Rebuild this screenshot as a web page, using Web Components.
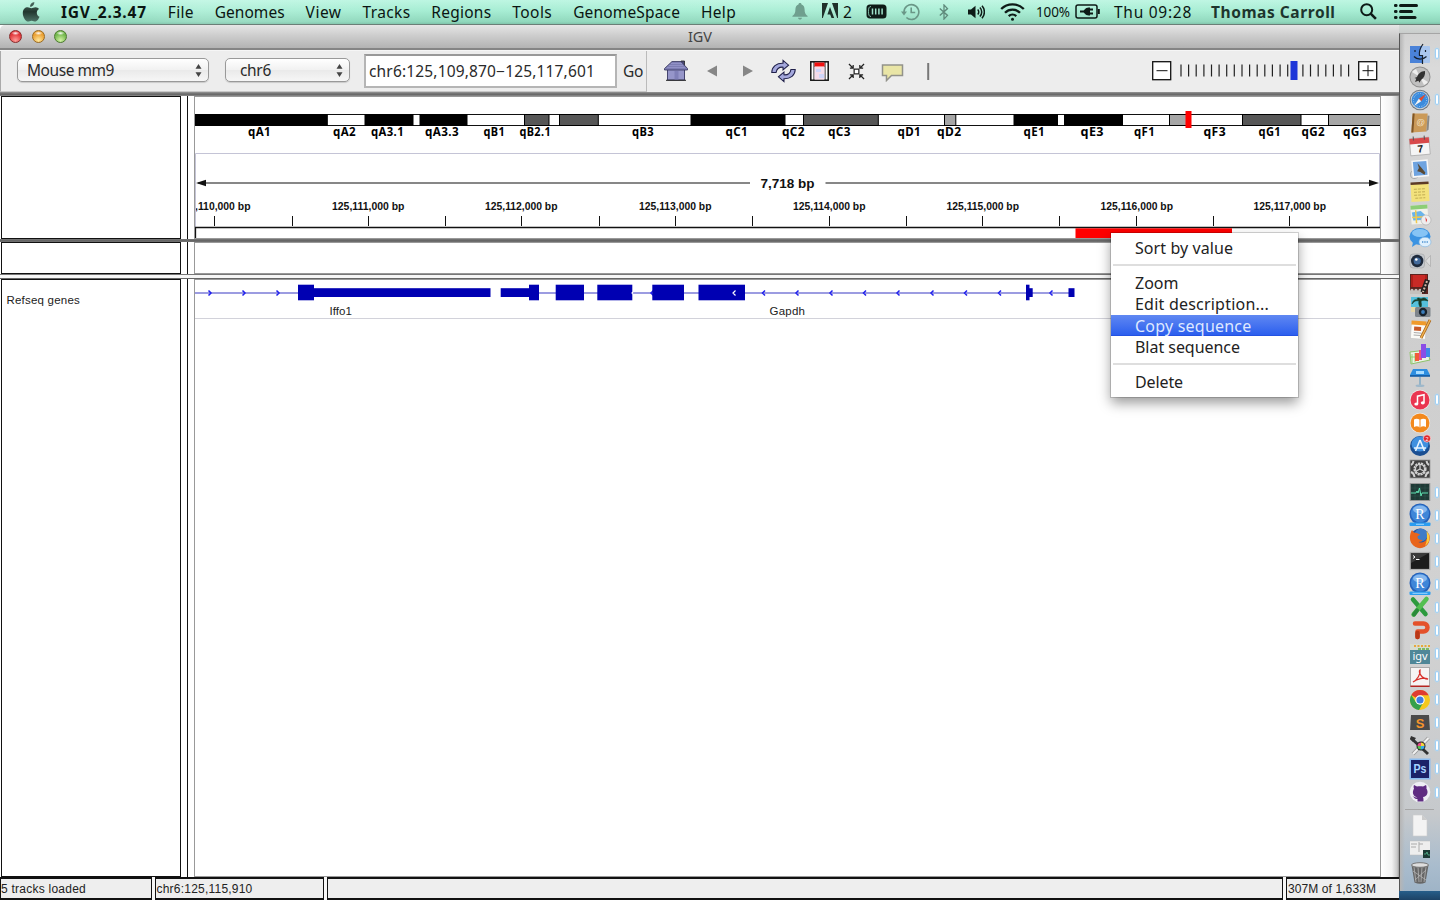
<!DOCTYPE html>
<html lang="en">
<head>
<meta charset="utf-8">
<title>IGV</title>
<style>
html,body{margin:0;padding:0;height:100%;overflow:hidden;background:#b9bcbd}
body{font-family:"Noto Sans","Open Sans",sans-serif;color:#111}
</style>
</head>
<body>
<igv-desktop></igv-desktop>
<script>
const mount=(el,html)=>{const t=document.createElement('template');t.innerHTML=html;el.attachShadow({mode:'open'}).append(t.content.cloneNode(true));};

/* ---------- desktop ---------- */
class Desktop extends HTMLElement{constructor(){super();mount(this,`
<style>
:host{display:grid;grid-template-rows:25px 875px;width:1440px;height:900px;position:relative;overflow:hidden}
.work{display:flex;height:875px}
context-menu{position:absolute;left:1111px;top:233px}
</style>
<menu-bar></menu-bar>
<div class="work"><igv-window></igv-window><app-dock></app-dock></div>
<context-menu>
<menu-row w="98">Sort by value</menu-row><menu-line></menu-line>
<menu-row w="43.5">Zoom</menu-row><menu-row w="134">Edit description...</menu-row><menu-row selected w="116.5">Copy sequence</menu-row><menu-row w="105">Blat sequence</menu-row>
<menu-line></menu-line><menu-row w="48">Delete</menu-row>
</context-menu>`);}}

/* ---------- menu bar ---------- */
class MenuBar extends HTMLElement{constructor(){super();mount(this,`
<style>
:host{display:flex;align-items:center;justify-content:space-between;box-sizing:border-box;height:25px;padding:0 22.500px 1px 22px;font-size:15.500px;line-height:24px;color:#0b1512;
background:linear-gradient(90deg,rgba(255,255,255,.12),transparent 8%,rgba(255,255,255,.12) 14%,transparent 30%,rgba(255,255,255,.08) 60%,transparent),linear-gradient(#bdf6e2,#a6edd3 45%,#8fd8bc 90%,#7fc4aa);border-bottom:1px solid #6b7f77}
nav,aside{display:flex;align-items:center;height:24px}
nav{gap:20.900px} svg{display:block;flex:none}
i{display:block;flex:none}
</style>
<nav>
<svg width="18" height="20" viewBox="0 0 18 20"><defs><linearGradient id="g" x2="0" y2="1"><stop stop-color="#4f6d63"/><stop offset=".5" stop-color="#22372f"/><stop offset="1" stop-color="#4d7467"/></linearGradient></defs><path fill="url(#g)" d="M12.3 0c.2 1.5-.5 2.8-1.300 3.600-.8.9-2 1.300-2.900 1.200C7.900 3.400 8.700 2.100 9.500 1.300 10.200.6 11.400.1 12.300 0zM17 7.100c-1.600 1-2.200 2.200-2.200 3.700 0 1.800 1.100 3.400 2.700 4-.7 2-2.500 4.800-4.300 4.800-1.300 0-1.900-.8-3.600-.8s-2.200.8-3.500.8C3.500 19.600.8 14.800.8 11.200.8 7.300 3.200 5.300 5.600 5.300c1.600 0 2.700.9 3.800.9 1 0 2.400-1 4.200-1 1.400 0 2.700.7 3.400 1.900z"/></svg>
<fit-text w="86" style="font-weight:700;">IGV_2.3.47</fit-text>
<fit-text w="26">File</fit-text><fit-text w="70">Genomes</fit-text><fit-text w="36">View</fit-text><fit-text w="48">Tracks</fit-text><fit-text w="60">Regions</fit-text><fit-text w="40">Tools</fit-text><fit-text w="107">GenomeSpace</fit-text><fit-text w="35">Help</fit-text>
</nav>
<aside>
<svg width="16" height="17" viewBox="0 0 16 17" fill="#6f9f8e"><path d="M8 0c1 0 1.600.7 1.500 1.500C11.700 2.300 12.500 4 12.600 6.500c.1 3.200.6 4.800 3 6.500v.7H.4V13c2.400-1.700 2.900-3.300 3-6.500C3.500 4 4.300 2.300 6.500 1.500 6.400.7 7 0 8 0zM6 14.700h4c-.2 2.400-3.800 2.400-4 0z"/></svg>
<i style="width:14px"></i>
<svg style="margin-top:-2px" width="16" height="15" viewBox="0 0 16 15" fill="#1f302a"><path d="M0 0h6L.8 15H0zM10 0h6v15h-.8zM8 4l4.200 11H9.500L8.200 11.500H5.400z"/></svg>
<i style="width:5px"></i><fit-text w="10">2</fit-text><i style="width:13px"></i>
<svg width="21" height="15" viewBox="0 0 21 15"><path fill="#0e1b17" d="M4 .5h13a3.500 3.500 0 0 1 3.500 3.500v7a3.500 3.500 0 0 1-3.500 3.500H4C1.500 14.500.5 13 .5 11V4C.5 2 1.500.5 4 .5z"/><path stroke="#9ee3cb" stroke-width="1.500" fill="none" d="M6.500 4.500v6M9.700 4.500v6M12.900 4.500v6M16.100 4.500v6"/><path stroke="#9ee3cb" stroke-width=".8" fill="none" d="M5 2.500c-2 0-2.500 1.500-2.500 5s.5 5 2.500 5"/></svg>
<i style="width:14px"></i>
<svg width="19" height="18" viewBox="0 0 19 18" fill="none" stroke="#6a9787" stroke-width="1.600"><path d="M3 9a7.400 7.400 0 1 1 2.400 5.500M10.200 4.500V9.500h4"/><path fill="#6a9787" stroke="none" d="M0 8.500h6L3 12.500z"/></svg>
<i style="width:19px"></i>
<svg width="10" height="16" viewBox="0 0 10 16" fill="none" stroke="#5f8a7b" stroke-width="1.300"><path d="M.8 4.400l7.700 7L5 15V1l3.500 3.600-7.700 7"/></svg>
<i style="width:19px"></i>
<svg width="17" height="14" viewBox="0 0 17 14" fill="#0e1b17"><path d="M0 4.500h3L7.500.8v12.400L3 9.500H0z"/><path fill="none" stroke="#0e1b17" stroke-width="1.500" d="M9.700 4.500a3.500 3.500 0 0 1 0 5M11.900 2.500a6.500 6.500 0 0 1 0 9M14 .7a9.500 9.500 0 0 1 0 12.600"/></svg>
<i style="width:15px"></i>
<svg width="25" height="18" viewBox="0 0 25 18" fill="none" stroke="#0e1b17" stroke-width="2.300"><path d="M1.200 6a16 16 0 0 1 22.600 0M5 9.700a10.600 10.600 0 0 1 15 0M8.700 13.200a5.500 5.500 0 0 1 7.600 0"/><circle cx="12.500" cy="16.200" r="1.500" fill="#0e1b17" stroke="none"/></svg>
<i style="width:11px"></i><fit-text w="34" style="font-size:13.500px;line-height:22px">100%</fit-text><i style="width:5px"></i>
<svg width="25" height="15" viewBox="0 0 25 15" fill="none" stroke="#0e1b17" stroke-width="1.500"><rect x="1" y="1" width="21" height="13" rx="2"/><path stroke-width="2" d="M23.800 5v5M5 7.500h5M15 5.600h3M15 9.400h3"/><path fill="#0e1b17" stroke="none" d="M15 3.500v8c-4 0-5.500-1.500-6.500-4 1-2.500 2.500-4 6.500-4z"/></svg>
<i style="width:14px"></i><fit-text w="78">Thu 09:28</fit-text><i style="width:19px"></i><fit-text w="124.500" style="font-weight:700;color:#1d352d">Thomas Carroll</fit-text><i style="width:24px"></i>
<svg width="17" height="17" viewBox="0 0 17 17" fill="none" stroke="#0e1b17"><circle cx="6.700" cy="6.700" r="5.500" stroke-width="2"/><path stroke-width="2.600" d="M10.700 10.700l5.200 5.200"/></svg>
<i style="width:17px"></i>
<svg width="24" height="15" viewBox="0 0 24 15" fill="#0e1b17"><rect width="3.500" height="3" rx="1.300"/><rect y="6" width="3.500" height="3" rx="1.300"/><rect y="12" width="3.500" height="3" rx="1.300"/><rect x="5" width="19" height="3" rx="1.500"/><rect x="5" y="6" width="14" height="3" rx="1.500"/><rect x="5" y="12" width="17.500" height="3" rx="1.500"/></svg>
</aside>`);}}

/* ---------- IGV window ---------- */
class Win extends HTMLElement{constructor(){super();mount(this,`
<style>
:host{display:grid;grid-template-rows:25px 42px 4px 143px 3px 32px 5px 598px 23px;box-sizing:border-box;width:1399px;height:875px;background:#fff;flex:none}
.title{display:grid;grid-template-columns:1fr auto 1fr;align-items:center;border-radius:5px 5px 0 0;background:linear-gradient(#e6e6e6,#d0d0d0 40%,#b3b3b3);border-bottom:2px solid #858585;box-sizing:border-box;font-size:14.500px;line-height:24px;color:#444;padding-right:2px}
.title fit-text{margin-top:-1px}
.lights{display:flex;gap:9.500px;padding-left:9px}
.lights i{width:13px;height:13px;border-radius:50%;box-sizing:border-box;border:1px solid #8b2b2b;background:radial-gradient(ellipse 4px 2px at 50% 20%,#fff,transparent),radial-gradient(circle at 50% 85%,#ff9d98,#e2393c 60%)}
.lights i+i{border-color:#9a6a20;background:radial-gradient(ellipse 4px 2px at 50% 20%,#fff,transparent),radial-gradient(circle at 50% 85%,#ffe79a,#eca235 60%)}
.lights i+i+i{border-color:#4b7a2e;background:radial-gradient(ellipse 4px 2px at 50% 20%,#fff,transparent),radial-gradient(circle at 50% 85%,#d3f3a4,#76b950 60%)}
.bar{background:linear-gradient(#979797,#6a6a6a 50%,#6a6a6a 75%,#999)}
.bar2{background:linear-gradient(#7c7c7c,#666 35%,#666 70%,#777)}
.bar3{background:linear-gradient(#777,#777 1px,#f7f7f7 1px,#f7f7f7 4px,#666 4px)}
.status{display:flex;gap:4px;background:#f6f6f6;font:12px/20px "Liberation Sans",sans-serif}
.status div{box-sizing:border-box;height:23px;border:1px solid #111;border-top-width:2px;border-bottom-width:2px;background:#eee;padding-left:1px;overflow:hidden;line-height:20px;color:#222;white-space:nowrap}
</style>
<div class="title"><div class="lights"><i></i><i></i><i></i></div><fit-text w="24">IGV</fit-text><span></span></div>
<igv-toolbar></igv-toolbar>
<div class="bar"></div>
<panel-row><genome-ruler></genome-ruler></panel-row>
<div class="bar2"></div>
<panel-row></panel-row>
<div class="bar3"></div>
<panel-row><fit-text slot="name" w="73.500">Refseq genes</fit-text><gene-track></gene-track></panel-row>
<div class="status"><div style="width:152px;padding-left:0"><fit-text w="85">5 tracks loaded</fit-text></div><div style="width:169px;margin-left:-1px;padding-left:.500px"><fit-text w="96">chr6:125,115,910</fit-text></div><div style="width:956px;margin-left:-1px"></div><div style="width:116px;margin-left:-1px"><fit-text w="88">307M of 1,633M</fit-text></div></div>`);}}

class PanelRow extends HTMLElement{constructor(){super();mount(this,`
<style>
:host{display:grid;grid-template-columns:180px 6px 1px 6px 1187px 18px;padding-left:1px;min-height:0;background:#fff;overflow:hidden;box-sizing:border-box}
.name{border:1px solid #111;box-sizing:border-box;font:11.500px/14px "Liberation Sans",sans-serif;padding:13px 0 0 4.500px;overflow:hidden;color:#222}
.mid{background:#111}
.track{box-sizing:border-box;border:1px solid #999;overflow:hidden}
.gut{background:linear-gradient(90deg,#fff,#f2f2f2 60%,#c8c8c8 90%,#999)}
</style>
<div class="name"><slot name="name"></slot></div><div></div><div class="mid"></div><div></div><div class="track"><slot></slot></div><div class="gut"></div>`);}}

/* ---------- toolbar ---------- */
class Toolbar extends HTMLElement{constructor(){super();
let t='';for(let i=0;i<23;i++){const x=(9+i*7.620).toFixed(1);t+=`<path d="M${x} 3.500V15.500"/>`;}
mount(this,`
<style>
:host{display:flex;justify-content:space-between;box-sizing:border-box;height:42px;background:#ededed;font-size:15.500px;line-height:22px;color:#2a2a2a;border-top:1px solid #f6f6f6}
.search{display:flex;align-items:center;box-sizing:border-box;width:647px;padding-left:17px;border-right:1px solid #bbb;border-bottom:1px solid #c8c8c8;border-left:1px solid #aaa}
.field{box-sizing:border-box;width:253px;height:34px;margin:0 6px 0 14px;border:2px solid #b5b5b5;border-top-color:#999;background:#fff;padding:3.500px 0 0 3px;line-height:22px}
.icons{display:flex;align-items:center;flex:1;padding:0 0 2px 17px}
.zoom{display:flex;align-items:center;padding:0 21px 2px 0}
svg{display:block;flex:none}
</style>
<div class="search">
<combo-box style="width:192px;margin-left:-1px" ><fit-text w="87">Mouse mm9</fit-text></combo-box>
<combo-box style="width:125px;margin-left:16px;--pad:14px"><fit-text w="31">chr6</fit-text></combo-box>
<div class="field"><fit-text w="226">chr6:125,109,870−125,117,601</fit-text></div>
<fit-text w="20">Go</fit-text>
</div>
<div class="icons">
<svg width="24" height="21" viewBox="0 0 24 21"><path d="M17 1h3.500v6H17z" fill="#4a4a78" stroke="#222" stroke-width=".8"/><path d="M3.500 9h17v11h-17z" fill="#9696ca" stroke="#44446e"/><path d="M10.500 11h4v9h-4z" fill="#8080b8"/><path d="M8 1.500h9L23.500 8.500v1.500H.5V8.500z" fill="#7d7db3" stroke="#33335a" stroke-width=".8"/><path d="M7 3.500h11M5 5.500h14M3 7.500h18" stroke="#9a9ace" stroke-width=".7"/><path d="M2 20.300h20" stroke="#222"/></svg>
<svg style="margin-left:19px" width="10" height="12" viewBox="0 0 10 12"><path d="M10 .5v11L0 6z" fill="#868686"/></svg>
<svg style="margin-left:26px" width="10" height="12" viewBox="0 0 10 12"><path d="M0 .5v11L10 6z" fill="#868686"/></svg>
<svg style="margin-left:18px" width="25" height="24" viewBox="0 0 26 24" fill="#a3a7dc" stroke="#20204a" stroke-width="1.100"><path d="M.8 13.500C1 7.500 5.500 3.800 12.500 4V.9l5.800 5-5.800 5V8C8.500 7.700 6 9.500 5.300 13.500z"/><path d="M25.200 10.500C25 16.500 20.500 20.200 13.500 20v3.100l-5.800-5 5.800-5V16c4 .3 6.500-1.500 7.200-5.500z"/></svg>
<svg style="margin-left:14px" width="19" height="20" viewBox="0 0 19 20"><rect x=".8" y=".8" width="17.400" height="18.400" fill="#fff" stroke="#111" stroke-width="1.500"/><path d="M4 1v18M15 1v18" stroke="#111"/><path fill="#f4dcea" d="M4.500 6h10v12.500h-10z"/><path fill="#cfd6fa" d="M6 8h5v3H6zM9 13h5v4H9z"/><path fill="#f01010" d="M4.500 1.500h10V5.500h-10z"/></svg>
<svg style="margin-left:19px;margin-top:1px" width="17" height="17" viewBox="0 0 18 18" fill="none" stroke="#222" stroke-width="1.300"><rect x="6.500" y="6.500" width="5" height="5" fill="#fff"/><path d="M1 1l4.500 4.500M5.500 2v3.500H2M17 1l-4.500 4.500M12.500 2v3.500H16M1 17l4.500-4.500M5.500 16v-3.500H2M17 17l-4.500-4.500M12.500 16v-3.500H16"/></svg>
<svg style="margin-left:16px;margin-top:3px" width="23" height="19" viewBox="0 0 23 19"><path d="M1.500 2h20v10.500H10.500L5.500 17.500v-5h-4z" fill="#e9e5a6" stroke="#92928a" stroke-width="1.500"/></svg>
<svg style="margin-left:23px" width="3" height="18"><path d="M1.200 1v17" stroke="#777" stroke-width="2"/></svg>
</div>
<div class="zoom">
<svg width="20" height="20" viewBox="0 0 20 20"><rect x=".7" y=".7" width="18" height="18" fill="#fff" stroke="#111" stroke-width="1.300"/><path d="M4.500 9.700h11" stroke="#111"/></svg>
<svg width="186" height="20" viewBox="0 0 186 20" stroke="#222" stroke-width="1.200">${t}<rect x="118.500" y="0" width="7" height="19" fill="#1d35d8" stroke="none"/></svg>
<svg width="20" height="20" viewBox="0 0 20 20"><rect x=".7" y=".7" width="18" height="18" fill="#fff" stroke="#111" stroke-width="1.300"/><path d="M4.500 9.700h11M10 4.200v11" stroke="#111"/></svg>
<span style="width:3px"></span>
</div>`);}}

class Combo extends HTMLElement{constructor(){super();mount(this,`
<style>
:host{display:flex;align-items:center;justify-content:space-between;box-sizing:border-box;height:24px;margin-bottom:2px;border:1.500px solid #999;border-radius:5px;background:linear-gradient(#fff,#f1f1f1 50%,#eaeaea 52%,#f6f6f6);padding:0 6px 0 var(--pad,9px);box-shadow:0 1px 1px rgba(0,0,0,.15)}
</style><slot></slot><svg width="7" height="13" viewBox="0 0 7 13" fill="#444"><path d="M3.500 0L6.500 4.800h-6zM3.500 13L.5 8.200h6z"/></svg>`);}}

/* ---------- genome ruler: chromosome bands, span, ticks, region of interest ---------- */
class Ruler extends HTMLElement{constructor(){super();
const B='#000',G='#575757',L='#a6a6a6';
const bands=[[194,327.3,B],[365,413,B],[420,467,B],[524.5,549,G],[559.5,598.300,G],[691,785,B],[803.500,878.300,G],[944.500,955.800,L],[1014,1057.500,B],[1064.500,1122.500,B],[1169.500,1188,L],[1242.500,1301,G],[1328.500,1382,L]];
const labels=[['qA1',248,271],['qA2',333,356],['qA3.1',371,404],['qA3.3',425,459],['qB1',483.500,505],['qB2.1',519.500,551],['qB3',632,654],['qC1',725.500,748],['qC2',782,805],['qC3',828,851],['qD1',897.500,921],['qD2',937,961.500],['qE1',1023.500,1045],['qE3',1080.500,1104],['qF1',1134,1155],['qF3',1203.500,1226],['qG1',1258.500,1281],['qG2',1301.500,1325],['qG3',1343,1367]];
const ticks=[214.500,292,368.500,445,521.500,599,675.500,752,829.500,906,982.500,1059.500,1136.500,1213.500,1289.500,1367.500];
let s='';
bands.forEach(([a,b,c])=>s+=`<rect x="${a}" y="114.500" width="${b-a}" height="11" fill="${c}" stroke="#000"/>`);
labels.forEach(([n,a,b])=>s+=`<text class="b" x="${a}" y="136" textLength="${b-a}" lengthAdjust="spacingAndGlyphs">${n}</text>`);
ticks.forEach(x=>{s+=`<path d="M${Math.floor(x)+.5} 216V226"/>`;});
s+='<text class="t" x="195" y="210" textLength="55.500" lengthAdjust="spacingAndGlyphs">,110,000 bp</text>';
[368,521,675,829,982.500,1136.500,1289.500].forEach((x,i)=>s+=`<text class="t" x="${x-36}" y="210" textLength="72.500" lengthAdjust="spacingAndGlyphs">125,11${i+1},000 bp</text>`);
mount(this,`
<style>:host{display:block}svg{display:block}text{stroke:none;fill:#111}.b{font:700 11.800px "Noto Sans",sans-serif;letter-spacing:.400px;fill:#000}.t{font:700 10.500px "Liberation Sans",sans-serif}.s{font:700 13.500px "Liberation Sans",sans-serif}</style>
<svg width="1186" height="141" viewBox="195 97 1186 141" fill="none" stroke="#111">
<path d="M194 114.500H1381M194 125.500H1381"/>${s}
<rect x="1185.500" y="111" width="6" height="17" fill="#f00" stroke="none"/>
<path stroke="#c4c4d6" d="M195.500 228V153.500H1379.500V228"/>
<path d="M198 183H750M825.500 183H1376" stroke-width="1.200"/><path fill="#111" stroke="none" d="M196 183l10-3.200v6.400zM1379 183l-10-3.200v6.400z"/>
<text class="s" x="760.500" y="188" textLength="54" lengthAdjust="spacingAndGlyphs">7,718 bp</text>
<path stroke-width="1.300" d="M195 227.500H1381M195.500 228V238"/>
<rect x="1075.500" y="228.300" width="156.500" height="10" fill="#f00" stroke="none"/>
</svg>`);}}

/* ---------- gene models ---------- */
class Genes extends HTMLElement{constructor(){super();
const r=(a,b,thick)=>`<rect x="${a}" y="${thick?284.700:288.200}" width="${b-a}" height="${thick?15.600:8.800}"/>`;
const ex=[[298,314,1],[314,490.500],[500.700,529],[529,539,1],[555.700,584,1],[597.300,632.300,1],[652.300,684,1],[698.500,745,1],[1026,1029.500,1],[1029,1032.700],[1068.500,1074.500]].map(e=>r(...e)).join('');
const right=[210,244,278].map(x=>`M${x-1.500} 290.500l2.500 2.500-2.500 2.500`).join('');
const left=[652,763.500,797,831,864.500,898,932,965.500,999.500,1051].map(x=>`M${x+1.500} 290.500l-2.500 2.500 2.500 2.500`).join('');
mount(this,`
<style>:host{display:block}svg{display:block}text{font:11.500px "Liberation Sans",sans-serif;fill:#222}</style>
<svg width="1186" height="60" viewBox="195 280 1186 60">
<path fill="none" stroke="#3a3ac4" stroke-width="1.200" d="M195 293H298M539 293H1069"/>
<path fill="none" stroke="#2020ee" stroke-width="1.500" d="${right}${left}"/>
<g fill="#0000b2">${ex}</g>
<path fill="none" stroke="#fff" stroke-width="1.200" d="M735.500 290.500l-2.500 2.500 2.500 2.500M633 292l-1 1 1 1"/>
<text x="329.500" y="315" textLength="22.500">Iffo1</text><text x="769.500" y="315" textLength="35.500">Gapdh</text>
<path stroke="#d2d2da" d="M195 318.500H1381"/>
</svg>`);}}

/* ---------- context menu ---------- */
class Ctx extends HTMLElement{constructor(){super();mount(this,`
<style>:host{display:flex;flex-direction:column;box-sizing:border-box;width:187px;height:164px;padding-top:4px;background:#fff;box-shadow:0 0 0 1px rgba(0,0,0,.16),0 6px 12px rgba(0,0,0,.4);font-size:16px;color:#222}</style><slot></slot>`);}}
class Row extends HTMLElement{connectedCallback(){if(this.shadowRoot)return;mount(this,`
<style>:host{display:block;box-sizing:border-box;height:21.500px;line-height:23px;padding-left:24px}:host([selected]){color:#dfe8ff;background:linear-gradient(#6088f2,#2c5fee 95%,#1c46d8)}</style><fit-text w="${this.getAttribute('w')}"><slot></slot></fit-text>`);}}
class Line extends HTMLElement{constructor(){super();mount(this,`<style>:host{display:block;height:2px;margin:5px 2px 6px;background:#dedede}</style>`);}}

/* ---------- dock ---------- */
const disc=(a,b,x='')=>`<circle cx="10" cy="10" r="10" fill="${b}"/><ellipse cx="10" cy="8" rx="8.500" ry="7.500" fill="${a}"/>${x}`;
const rs=n=>`<circle cx="10" cy="9" r="10.500" fill="#2560b8"/><circle cx="10" cy="8.500" r="9" fill="#3f86d8"/><ellipse cx="10" cy="4.500" rx="7" ry="4" fill="#86b8ee"/><text x="10" y="13.500" font-size="14" text-anchor="middle" fill="#fff" font-family="Liberation Serif">R</text><rect x="-.5" y="17.500" width="21" height="3.500" rx="1" fill="#2b9cf0"/><path stroke="#bfe2ff" stroke-width=".8" d="M${n} 19.300H${20-n}"/>`;
const ICONS=[
['<rect y="2" width="20" height="17" rx="1" fill="#a9c6ee"/><path d="M0 2h12c-2 4-3 7-2.500 10H12v7H0z" fill="#4a82d8"/><path d="M13 0c-3 4-4 8-3.500 11.500h3V20M4 12.500c3 3.500 9 3.500 12.500 0M5 6v2M15.500 6v2" fill="none" stroke="#15202e" stroke-width="1.200"/>',1],
['<circle cx="10" cy="10" r="10.500" fill="#8f8f8f"/><circle cx="10" cy="10" r="9.600" fill="#c0c0c0"/><path d="M10 10L2 5A9 9 0 0 1 6 2zM10 10l8 5a9 9 0 0 1-4 3z" fill="#eee"/><path d="M15 4c-4 0-7 3-8 6l-2.500 1 1.800.8L5 15l3.500-1.200.9 2L11 13c3-2 4.500-5 4-9z" fill="#333"/>'],
['<circle cx="10" cy="10" r="10.300" fill="#6f7880"/><circle cx="10" cy="10" r="9.300" fill="#c8ced4"/><circle cx="10" cy="10" r="8.300" fill="#3b8bdc"/><circle cx="10" cy="10" r="6.500" fill="none" stroke="#a6d0f5" stroke-dasharray="1 1.500"/><path d="M16 4l-4.800 7.200-2.400-2.400z" fill="#e84a28"/><path d="M4 16l4.800-7.200 2.400 2.400z" fill="#f4f4f4"/>',1],
['<g transform="rotate(4 10 10)"><path d="M2 1l15-1v18L2 20z" fill="#cb9a58"/><path d="M2 1l2-.1v19L2 20z" fill="#7f5525"/><path d="M17 2h2v14l-2 2z" fill="#8c8a86"/><text x="6.500" y="12" font-size="8.500" fill="#f4e3c4" font-family="Liberation Sans">@</text></g>'],
['<g transform="rotate(-5 10 10)"><rect y="2" width="19.500" height="17" fill="#f5f5f5" stroke="#999" stroke-width=".6"/><rect y="2" width="19.500" height="5.500" fill="#d8494a"/><path stroke="#555" d="M4 0v4M15 0v4"/><text x="10" y="16.500" font-size="10.500" font-weight="bold" text-anchor="middle" fill="#222" font-family="Liberation Sans">7</text></g>'],
['<g transform="rotate(-5 10 10)"><circle cx="4" cy="15" r="4" fill="none" stroke="#aaa"/><rect x="2" y="1" width="16.500" height="17" fill="#f7f7f7"/><rect x="3.500" y="2.500" width="13.500" height="14" fill="#6ea3e0"/><path d="M8 4l3 4 4 6-1 2-4-3-3-1 2-3z" fill="#5a4a34"/></g>'],
['<g transform="rotate(-3 10 10)"><rect x="1" y="1" width="18" height="18.500" fill="#f3e27c"/><rect x="1" width="18" height="2.500" fill="#5c3a26"/><path stroke="#b5a04a" stroke-width=".8" stroke-dasharray="3 1" d="M4 7h12M4 10h12M4 13h11M5 16h10"/></g>'],
['<g transform="rotate(-4 10 10)"><rect x="1" y="0" width="17" height="19" fill="#f1f1ea"/><rect x="1" y="0" width="17" height="4" fill="#8dce76"/><path d="M2 7l9-1 4 4v5H3z" fill="#6ab4ea"/><path d="M6 5v13M2 12h13" stroke="#f2c94c" stroke-width="1.500"/></g><circle cx="16" cy="15" r="5" fill="#eee" stroke="#aaa" stroke-width=".6"/><path d="M15.500 12l1.500 3-1 2.500z" fill="#d22"/>'],
['<ellipse cx="10" cy="8.500" rx="10.500" ry="8.500" fill="#3b93e2"/><ellipse cx="10" cy="5" rx="8" ry="4" fill="#86c4f5"/><path d="M3 14l-1 5 6-4z" fill="#3b93e2"/><ellipse cx="15" cy="14" rx="6" ry="4.800" fill="#dff0fd" stroke="#79b2e0" stroke-width=".6"/><path d="M12 14h1.300m1 0h1.300m1 0h1.300" stroke="#4a90d0" stroke-width="1.400"/>'],
['<rect y="3" width="14.500" height="14" rx="3" fill="#c5c9ce" stroke="#999" stroke-width=".5"/><circle cx="7.200" cy="10" r="6.200" fill="#1e2a3c"/><circle cx="7.200" cy="10" r="3.600" fill="#41699b"/><circle cx="6.300" cy="8.500" r="1.300" fill="#fff"/><path d="M15.500 10l5-5.500v11z" fill="#ddd" stroke="#999" stroke-width=".5"/>'],
['<rect y="0" width="18" height="20" fill="#5c2420"/><path d="M1 1h16v12H1z" fill="#c92a26"/><path d="M2 1v12M16 1v12" stroke="#93150f"/><path d="M0 17c1-3 3-3 4 0 1-3 3-3 4 0 1-3 3-3 4 0v3H0z" fill="#c6c1bd"/><path d="M15 5l5 1.500-5 13-4.500-2z" fill="#222"/><path d="M17 7l-4 11" stroke="#d8b8a8" stroke-dasharray="2 1.500" stroke-width="2"/>'],
['<rect x="1" y="0" width="17" height="15" fill="#55c0dc"/><path d="M1 10h17v5H1z" fill="#e5d7a8"/><path d="M10 10C8 6 9 5 9 4 5 3 4 5 2 7c1-4 3-5 6-4C6 1 8 0 11 2c3-2 5-1 7 2-3-1-5-1-7 0 0 2 1 4 0 6z" fill="#183c28" stroke="#183c28" stroke-width=".6"/><rect x="5" y="10" width="15.500" height="10" rx="1.500" fill="#7f858b"/><circle cx="13" cy="15" r="4.200" fill="#18222c"/><circle cx="13" cy="15" r="1.900" fill="#3c7ebb"/>'],
['<g transform="rotate(4 10 10)"><path d="M1 2h15v17H1z" fill="#fbfbf7" stroke="#bbb" stroke-width=".5"/><rect x="1" y="1" width="15" height="4" fill="#f09b2c"/><rect x="4" y="7" width="7" height="4" fill="#c85a28"/><path d="M4 13h8M4 15.500h7" stroke="#aaa"/></g><path d="M20 0L11 18" stroke="#a8641a" stroke-width="2.800"/><path d="M20 0L11 18" stroke="#f2b450" stroke-width="1.400"/>'],
['<path d="M0 8l17-2 3 10-19 4z" fill="#edf3e6" stroke="#8ec26a"/><path d="M2 10v9M5 9v9M1 13h14" stroke="#7fca5a" stroke-width=".8"/><path d="M5 9h4v8H5z" fill="#f25b3a"/><path d="M9 6h3v10H9z" fill="#e8508a"/><path d="M11 0h5v14h-5z" fill="#8a4de6"/><path d="M16 4h4v9h-4z" fill="#3e87e8"/>'],
['<path d="M3 2h14l3 6H0z" fill="#2d8ee0"/><path d="M0 8h20v1.800H0z" fill="#1760a8"/><rect x="6" y="4" width="8" height="3" fill="#a8dcff"/><path d="M10 10v8" stroke="#7faac4" stroke-width="1.500"/><ellipse cx="10" cy="18.800" rx="4.500" ry="1.200" fill="#9fb8ca"/>'],
['<circle cx="10" cy="10" r="10.200" fill="#eee"/><circle cx="10" cy="10" r="9.500" fill="#ea3550"/><path d="M7.500 14V6.200L14 4.800V12.500" fill="none" stroke="#fff" stroke-width="1.500"/><ellipse cx="6.300" cy="14" rx="2" ry="1.600" fill="#fff"/><ellipse cx="12.800" cy="12.800" rx="2" ry="1.600" fill="#fff"/>',1],
['<circle cx="10" cy="10" r="10.200" fill="#eee"/><circle cx="10" cy="10" r="9.500" fill="#f3891d"/><path d="M4 6.500c2-1 4-.8 6 .5 2-1.300 4-1.500 6-.5v7.500c-2-1-4-.8-6 .5-2-1.300-4-1.500-6-.5z" fill="#fff"/><path d="M10 7v7.500" stroke="#f3891d"/>'],
[disc('#3f90e0','#1b4f92','<path d="M10 4L5.500 15M10 4l4.500 11M4 12h12" stroke="#e8f4ff" stroke-width="1.600" fill="none"/><circle cx="17" cy="2.500" r="3.700" fill="#e0262c" stroke="#fff" stroke-width=".6"/><text x="17" y="4.500" font-size="5.500" text-anchor="middle" fill="#fff" font-family="Liberation Sans">2</text>')],
['<rect y="1" width="20" height="18" fill="#3f3f3f" stroke="#999" stroke-width=".8"/><g fill="none" stroke="#d0d0d0"><circle cx="10" cy="10" r="5.500" stroke-width="2.200" stroke-dasharray="2.200 .7"/><circle cx="10" cy="10" r="4.500" stroke-width="1.200"/><path d="M10 10V5M10 10l4.500 2.500M10 10l-4.500 2.500" stroke-width="1.300"/><path d="M1 13q3 1 3.500 5M19 13q-3 1-3.500 5M1 6q2-1 2.500-4M19 6q-2-1-2.500-4" stroke-width="2"/></g>'],
['<rect x=".2" y="1.500" width="19.600" height="17" fill="#1f3a36" stroke="#999"/><path d="M1 6h18M1 10h18M1 14h18M5 2v16M10 2v16M15 2v16" stroke="#335b50" stroke-width=".5"/><path d="M1 11h5l1-2 1 2 1.500-5 1.500 8 1-3h6" stroke="#5fe0b0" fill="none"/>',1],
[rs(6),1],
['<circle cx="10" cy="10" r="9.500" fill="#25529c"/><circle cx="11" cy="7" r="6.500" fill="#3f7cc8"/><path d="M2 2C-.5 6-1 12 2 16c4 5.500 12 5.500 16 0 2-3 2.500-8 .5-11 .3 3-1 5-2 6-1 3-5 4.500-8 3 2 0 4-1 4-2-3 0-5-1-5-3 0-1 1-2 3-2L8 5.500C6 4.500 4 5 3.500 4z" fill="#e8641b"/><path d="M16.500 3c4 4 4.500 11-1.500 15 2-4 2.500-9 1.500-15z" fill="#ffc93b"/>',1],
['<rect x=".2" y="1.500" width="19.600" height="17" fill="#1c1c1c" stroke="#b0b0b0" stroke-width="1.200"/><path d="M1 2h18L1 12z" fill="#3b3b3b"/><path d="M3 4.500l2 1.500-2 1.500M6 8.500h3.500" stroke="#fff" fill="none"/>',1],
[rs(2.500),1],
['<path d="M3 2.500L15.500 17" stroke="#2d9a3e" stroke-width="4.500" stroke-linecap="round"/><path d="M16.500 2L3.500 17.500" stroke="#53bf50" stroke-width="4.500" stroke-linecap="round"/><path d="M7 13.300l-3 4.200" stroke="#2a8a3a" stroke-width="4" stroke-linecap="round"/>',1],
['<path d="M5 3.500h8.500a3.500 3.500 0 0 1 0 8H7.500V17" fill="none" stroke="#e4512a" stroke-width="4.500" stroke-linecap="round" stroke-linejoin="round"/><path d="M7.500 13V17" stroke="#b93818" stroke-width="4.500" stroke-linecap="round"/>',1],
['<rect y="0" width="20" height="20" fill="#4f8798"/><rect y="0" width="20" height="6" fill="#d6dcd0"/><path stroke="#e8a63c" stroke-width="2" stroke-dasharray="2 1.500" d="M4 2h16"/><path stroke="#7cba64" stroke-width="2" stroke-dasharray="3 1" d="M8 5h12"/><text x="10" y="16" font-size="11" text-anchor="middle" fill="#fff" font-family="Noto Sans">igv</text>',1],
['<rect x=".5" y=".5" width="19" height="19" fill="#f6f4f4" stroke="#aaa"/><path d="M.5 18.500h19V20H.5z" fill="#b52420"/><path d="M3 15c4-2 8-8 7-12-2 1 1 9 8 9-4-2-11 0-15 3z" fill="none" stroke="#d8302a" stroke-width="1.300"/>',1],
['<circle cx="10" cy="10" r="10" fill="#f4c81e"/><path d="M10 10L1.300 5A10 10 0 0 1 18.700 5.300H10z" fill="#df3b30"/><path d="M1.300 5A10 10 0 0 0 9 20l4.200-7.500L5.800 12z" fill="#35a04c"/><circle cx="10" cy="10" r="4.700" fill="#fff"/><circle cx="10" cy="10" r="3.600" fill="#3f7de0"/>',1],
['<path d="M1 2h18l1 16H0z" fill="#4a4a4a"/><path d="M0 17h20v2H0z" fill="#ccc"/><text x="10" y="14.500" font-size="13" font-weight="bold" text-anchor="middle" fill="#f5952c" font-family="Liberation Sans">S</text>',1],
['<path d="M1 2l17 16" stroke="#333" stroke-width="3"/><path d="M18.500 2L3 18" stroke="#999" stroke-width="3.800"/><path d="M18.500 2L3 18" stroke="#f0f0f0" stroke-width="2"/><path d="M1 0l5 2-3 4-3-3z" fill="#333"/><circle cx="11" cy="10" r="4.500" fill="#222"/><path d="M11 10V6.500a3.500 3.500 0 0 1 3.500 3.500z" fill="#f4d23a"/><path d="M11 10h3.500a3.500 3.500 0 0 1-3.500 3.500z" fill="#38a8e8"/><path d="M11 10v3.500a3.500 3.500 0 0 1-3.500-3.500z" fill="#59c14f"/><path d="M11 10H7.500a3.500 3.500 0 0 1 3.500-3.500z" fill="#e64a8c"/>',1],
['<rect x="-.5" y="-.5" width="21" height="21" fill="#8cbcf0"/><rect x="1" y="1" width="18" height="18" fill="#1b2168"/><text x="10" y="14" font-size="12" font-weight="bold" text-anchor="middle" textLength="13" lengthAdjust="spacingAndGlyphs" fill="#a5d2ff" font-family="Liberation Sans">Ps</text>',1],
['<circle cx="10" cy="10" r="10.300" fill="#efeff5"/><path d="M4 3l3 1.500c2-.5 4-.5 6 0L16 3c.7 1.500.6 2.600.4 3.500 2.600 4 .6 8-3.400 8.500.5 1 .5 3 .5 4.500h-6V17c-3 .6-3-2-5-2.500 2-.5 3 1.500 5 1-4-1-6-4.500-3.500-9C3.500 5.500 3.400 4.500 4 3z" fill="#5f2c82"/>',1]];
class Dock extends HTMLElement{constructor(){super();mount(this,`
<style>
:host{display:block;box-sizing:border-box;width:41px;height:875px;padding-top:8px;background:linear-gradient(#d5dbd8,#c9cccb 8px,transparent 8px),linear-gradient(#2a6796,#1d4265) bottom/100% 12px no-repeat,#1f4d74}
.shelf{display:flex;flex-direction:column;box-sizing:border-box;height:858px;padding:8px 0 0 9.500px;border-left:1px solid #555;border-top:1px solid #a5a5a5;background:linear-gradient(90deg,#b5b5b5,transparent 5px),linear-gradient(#d2d2d2,#dadada 4%,#cecece 30%,#d2d2d2 70%,#c6c9cc 91%,#a9bccd 97%,#9fb4c7)}
.sep{height:1.500px;margin:5px 6px 3px -5px;background:#a6a6a6}
.f{display:block;width:20px;flex:none;margin-top:-1px}
</style>
<div class="shelf">${ICONS.map(([,on],i)=>`<dock-item n="${i}" ${on?'on':''}></dock-item>`).join('')}
<div class="sep"></div>
<svg class="f" height="72" viewBox="0 0 20 72"><path d="M3 3h9l5 5v16H3z" fill="#f3f3f3" stroke="#ccc" stroke-width=".6"/><path d="M12 3v5h5z" fill="#ccc"/><rect x="-.5" y="29" width="21" height="14" fill="#eee" stroke="#bbb" stroke-width=".5"/><path d="M1 32h6M1 35h5M9 32h4M9 30v10" stroke="#aaa"/><rect x="13" y="38" width="8" height="8" fill="#1d3a36"/><path d="M14 42h2l1-2 1 3h2" stroke="#5fc89c" fill="none" stroke-width=".7"/><path d="M1.500 53h17l-3 17.500q-5.500 2.500-11 0z" fill="#666"/><path d="M4 55l2 15M8 55l1 15M12 55l-1 15M16 55l-2 15M3 59l13 9M16 58L5 68" stroke="#b4b4b4" stroke-width=".8"/><ellipse cx="10" cy="53" rx="8.500" ry="2.300" fill="#dedede" stroke="#777"/></svg>
</div>`);}}
class DockItem extends HTMLElement{connectedCallback(){if(this.shadowRoot)return;mount(this,`
<style>:host{display:flex;align-items:center;justify-content:space-between;height:23.090px;flex:none;box-sizing:border-box;padding-right:1.500px}svg{display:block;overflow:visible}i{width:4px;height:11px;border-radius:2px;background:#fff;border:1px solid #9fd0f5;box-sizing:border-box;box-shadow:0 0 2px #a8dcff}</style>
<svg width="20" height="20" viewBox="0 0 20 20">${ICONS[+this.getAttribute('n')][0]}</svg>${this.hasAttribute('on')?'<i></i>':''}`);}}

/* Inline label that spreads its letters to the width in "w". */
class Fit extends HTMLElement{constructor(){super();mount(this,`<style>:host{display:inline-block;white-space:pre;flex:none}</style><span><slot></slot></span>`);}
connectedCallback(){const w=+this.getAttribute('w');if(!w)return;
let txt=this.textContent.trim();if(!txt){const h=this.getRootNode().host;txt=h?h.textContent.trim():'';}
const n=this.shadowRoot.querySelector('span').getBoundingClientRect().width;
if(n&&txt)this.style.letterSpacing=((w-n)/txt.length).toFixed(3)+'px';this.style.width=w+'px';}}

[['menu-bar',MenuBar],['igv-window',Win],['panel-row',PanelRow],['igv-toolbar',Toolbar],['combo-box',Combo],['genome-ruler',Ruler],['gene-track',Genes],['context-menu',Ctx],['menu-row',Row],['menu-line',Line],['app-dock',Dock],['dock-item',DockItem],['igv-desktop',Desktop],['fit-text',Fit]].forEach(([n,c])=>customElements.define(n,c));
</script>
</body>
</html>
